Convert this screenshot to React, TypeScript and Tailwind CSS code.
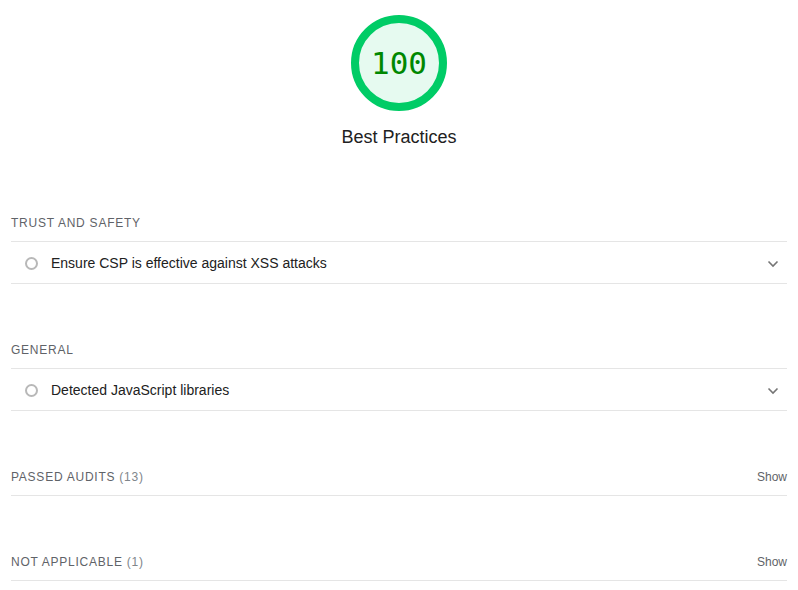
import type { FC } from 'react';

const Gauge: FC<{ score: number }> = ({ score }) => (
  <div className="relative w-[96px] h-[96px]">
    <svg width="96" height="96" viewBox="0 0 96 96" className="absolute inset-0">
      <circle cx="48" cy="48" r="44" fill="#e6faf0" stroke="#00cc66" strokeWidth="8" />
    </svg>
    <div className="absolute inset-0 flex items-center justify-center text-[31px] leading-none text-[#008800] [font-family:'DejaVu_Sans_Mono',monospace]">
      {score}
    </div>
  </div>
);

const Chevron: FC = () => (
  <svg width="12" height="8" viewBox="0 0 12 8" className="text-[#757575]">
    <path d="M1.5 1.5 L6 6 L10.5 1.5" fill="none" stroke="currentColor" strokeWidth="1.6" />
  </svg>
);

const AuditRow: FC<{ title: string }> = ({ title }) => (
  <div className="flex items-center h-[42px] pt-[2px] border-b border-[#e5e5e5]">
    <span className="w-[13px] h-[13px] rounded-full border-2 border-[#b8b8b8] ml-[14px] mr-[13px]" />
    <span className="text-[14px] text-[#212121]">{title}</span>
    <span className="ml-auto mr-[8px] flex items-center">
      <Chevron />
    </span>
  </div>
);

const SectionTitle: FC<{ label: string; count?: number; show?: boolean }> = ({ label, count, show }) => (
  <div className="flex items-center h-[28px] leading-[16px] pt-[1px] pb-[11px] border-b border-[#e5e5e5]">
    <span className="text-[12px] uppercase tracking-[0.75px] text-[#5f6368]">
      {label}
      {count !== undefined && <span className="text-[#80868b]"> ({count})</span>}
    </span>
    {show && <span className="ml-auto text-[12px] text-[#5f6368]">Show</span>}
  </div>
);

export default function App() {
  return (
    <div className="w-[798px] h-[590px] overflow-hidden bg-white [font-family:'Liberation_Sans',Arial,sans-serif]">
      <div className="flex flex-col items-center pt-[15px]">
        <Gauge score={100} />
        <div className="mt-[14px] text-[18px] leading-[24px] text-[#212121]">Best Practices</div>
      </div>
      <div className="px-[11px]">
        <div className="mt-[65px]">
          <SectionTitle label="Trust and Safety" />
          <AuditRow title="Ensure CSP is effective against XSS attacks" />
        </div>
        <div className="mt-[57px]">
          <SectionTitle label="General" />
          <AuditRow title="Detected JavaScript libraries" />
        </div>
        <div className="mt-[57px]">
          <SectionTitle label="Passed audits" count={13} show />
        </div>
        <div className="mt-[57px]">
          <SectionTitle label="Not applicable" count={1} show />
        </div>
      </div>
    </div>
  );
}
